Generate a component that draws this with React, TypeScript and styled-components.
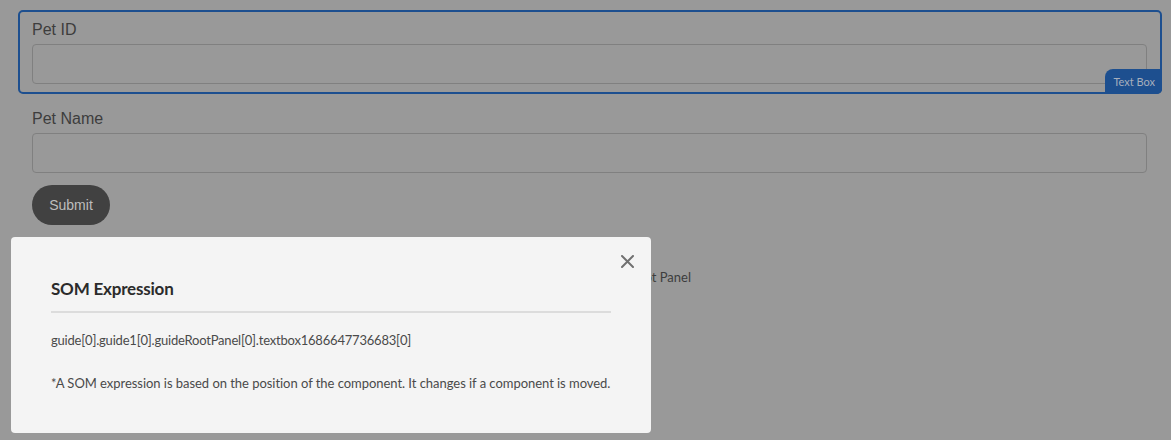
import React from 'react';
import styled, { createGlobalStyle } from 'styled-components';

const GlobalStyle = createGlobalStyle`
  html, body {
    margin: 0;
    padding: 0;
    background: #999999;
  }
  body {
    font-family: 'Liberation Sans', Arial, sans-serif;
    overflow: hidden;
  }
`;

const Page = styled.div`
  height: 440px;
  padding: 10px 9px 0 18px;
  box-sizing: border-box;
  display: flex;
  flex-direction: column;
  gap: 5px;
`;

const FieldBox = styled.div<{ $selected?: boolean }>`
  position: relative;
  border: 2px solid ${(p) => (p.$selected ? '#1d4f8f' : 'transparent')};
  border-radius: 5px;
  padding: 9px 13px 8px 12px;
  display: flex;
  flex-direction: column;
  gap: 5px;
`;

const Label = styled.label`
  font-size: 16px;
  line-height: 18px;
  color: #3d3d3d;
`;

const Input = styled.div`
  height: 40px;
  box-sizing: border-box;
  border: 1px solid #808080;
  border-radius: 4px;
`;

const Badge = styled.span`
  position: absolute;
  right: -2px;
  bottom: -2px;
  height: 25px;
  padding: 0 7px 0 8px;
  display: flex;
  align-items: center;
  background: #1d4f8f;
  color: #a6aebc;
  font-family: Lato, sans-serif;
  font-size: 11px;
  border-radius: 8px 0 5px 0;
`;

const SubmitButton = styled.button`
  margin: -3px 0 0 14px;
  width: 78px;
  height: 40px;
  border: none;
  border-radius: 20px;
  background: #414141;
  color: #bdbdbd;
  font-family: 'Liberation Sans', Arial, sans-serif;
  font-size: 14px;
  align-self: flex-start;
`;

const Caption = styled.div`
  width: 673px;
  margin-top: 39px;
  text-align: right;
  font-family: Lato, sans-serif;
  font-size: 13px;
  color: #3d3d3d;
`;

const Dialog = styled.div`
  position: fixed;
  left: 11px;
  top: 237px;
  width: 640px;
  height: 196px;
  box-sizing: border-box;
  padding: 41px 40px 0;
  background: #f4f4f4;
  border-radius: 4px;
  font-family: Lato, sans-serif;
`;

const CloseButton = styled.button`
  position: absolute;
  top: 16px;
  right: 16px;
  width: 16px;
  height: 16px;
  padding: 0;
  border: none;
  background: none;
  display: flex;
  align-items: center;
  justify-content: center;
`;

const Title = styled.h2`
  margin: 0;
  padding-bottom: 12px;
  border-bottom: 2px solid #dcdcdc;
  font-size: 17px;
  font-weight: 700;
  letter-spacing: -0.2px;
  color: #2b2b2b;
`;

const Expression = styled.p`
  margin: 19px 0 0;
  font-size: 13px;
  letter-spacing: -0.2px;
  color: #4a4a4a;
`;

const Note = styled.p`
  margin: 27px 0 0;
  font-size: 13px;
  letter-spacing: -0.04px;
  white-space: nowrap;
  color: #4a4a4a;
`;

export default function App() {
  return (
    <>
      <GlobalStyle />
      <Page>
        <FieldBox $selected>
          <Label>Pet ID</Label>
          <Input />
          <Badge>Text Box</Badge>
        </FieldBox>
        <FieldBox>
          <Label>Pet Name</Label>
          <Input />
        </FieldBox>
        <SubmitButton>Submit</SubmitButton>
        <Caption>Guide Root Panel</Caption>
      </Page>
      <Dialog>
        <CloseButton aria-label="Close">
          <svg width="13" height="13" viewBox="0 0 13 13">
            <path d="M1 1 L12 12 M12 1 L1 12" stroke="#707070" strokeWidth="2" strokeLinecap="round" />
          </svg>
        </CloseButton>
        <Title>SOM Expression</Title>
        <Expression>guide[0].guide1[0].guideRootPanel[0].textbox1686647736683[0]</Expression>
        <Note>*A SOM expression is based on the position of the component. It changes if a component is moved.</Note>
      </Dialog>
    </>
  );
}
